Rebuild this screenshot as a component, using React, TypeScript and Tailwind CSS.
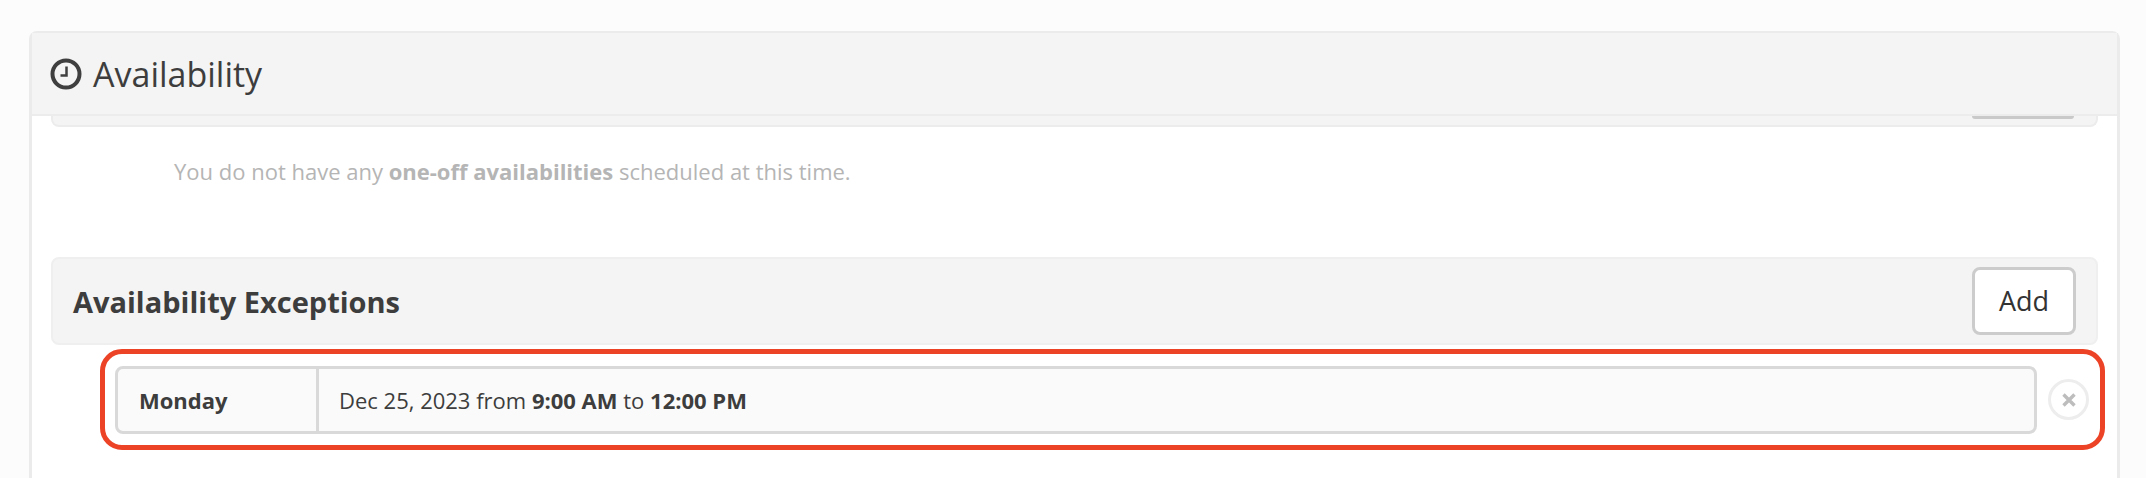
export default function App() {
  return (
    <div
      className="h-[478px] overflow-hidden bg-[#fcfcfc] pt-[31px] pl-[29px] pr-[26px] text-[#3d3d3d]"
      style={{ fontFamily: '"Open Sans", "Noto Sans", sans-serif' }}
    >
      <div className="h-[500px] rounded-t-[8px] border-[3px] border-b-0 border-[#ebebeb] bg-white">
        <div className="flex h-[83px] items-center gap-[11px] border-b-2 border-[#ececec] bg-[#f4f4f4] pl-[18px] -mt-px">
          <svg width="32" height="32" viewBox="0 0 32 32" fill="none" stroke="#3f3f3f" className="shrink-0">
            <circle cx="16" cy="16" r="13.5" strokeWidth="4" />
            <path d="M16.5 8.5V17.5H10.5" strokeWidth="2.5" />
          </svg>
          <h1 className="text-[34px] font-normal leading-none">Availability</h1>
        </div>

        <div className="px-[19px]">
          <div className="flex h-[11px] justify-end rounded-b-[8px] border-[2px] border-t-0 border-[#ececec] bg-[#f4f4f4] pr-[22px]">
            <div className="h-[3px] w-[102px] rounded-b-[6px] bg-[#c9c9c9]" />
          </div>

          <p className="mt-[31px] pl-[123px] text-[22px] leading-[26px] text-[#b5b5b5]">
            You do not have any <b className="font-bold">one-off availabilities</b> scheduled at this time.
          </p>

          <div className="mt-[73px] flex h-[88px] items-center justify-between rounded-[8px] border-2 border-[#efefef] bg-[#f4f4f4] pl-[20px] pr-[20px]">
            <h2 className="text-[29px] font-bold leading-none">Availability Exceptions</h2>
            <button className="h-[68px] w-[104px] rounded-[8px] border-[3px] border-[#cccccc] bg-white text-[27px] text-[#333333]">
              Add
            </button>
          </div>

          <div className="ml-[49px] mr-[-7px] mt-[4px] flex h-[101px] items-center rounded-[22px] border-[5px] border-[#ec4326] bg-white pl-[10px] pr-[11px]">
            <div className="flex h-[68px] min-w-0 flex-1 rounded-[8px] border-[3px] border-[#d9d9d9] bg-[#fafafa] text-[22px] leading-none">
              <div className="flex w-[201px] items-center border-r-[3px] border-[#d9d9d9] pl-[21px] font-bold">Monday</div>
              <div className="flex items-center gap-[0.28em] whitespace-pre pl-[20px]">
                <span>
                  Dec 25, 2023 from <b className="font-bold">9:00 AM</b> to <b className="font-bold">12:00 PM</b>
                </span>
              </div>
            </div>
            <button className="ml-[11px] flex h-[41px] w-[41px] shrink-0 items-center justify-center rounded-full border-[3px] border-[#ededed] bg-white">
              <svg width="14" height="14" viewBox="0 0 14 14" stroke="#bdbdbd" strokeWidth="3.4">
                <path d="M1.5 1.5L12.5 12.5M12.5 1.5L1.5 12.5" />
              </svg>
            </button>
          </div>
        </div>
      </div>
    </div>
  );
}
